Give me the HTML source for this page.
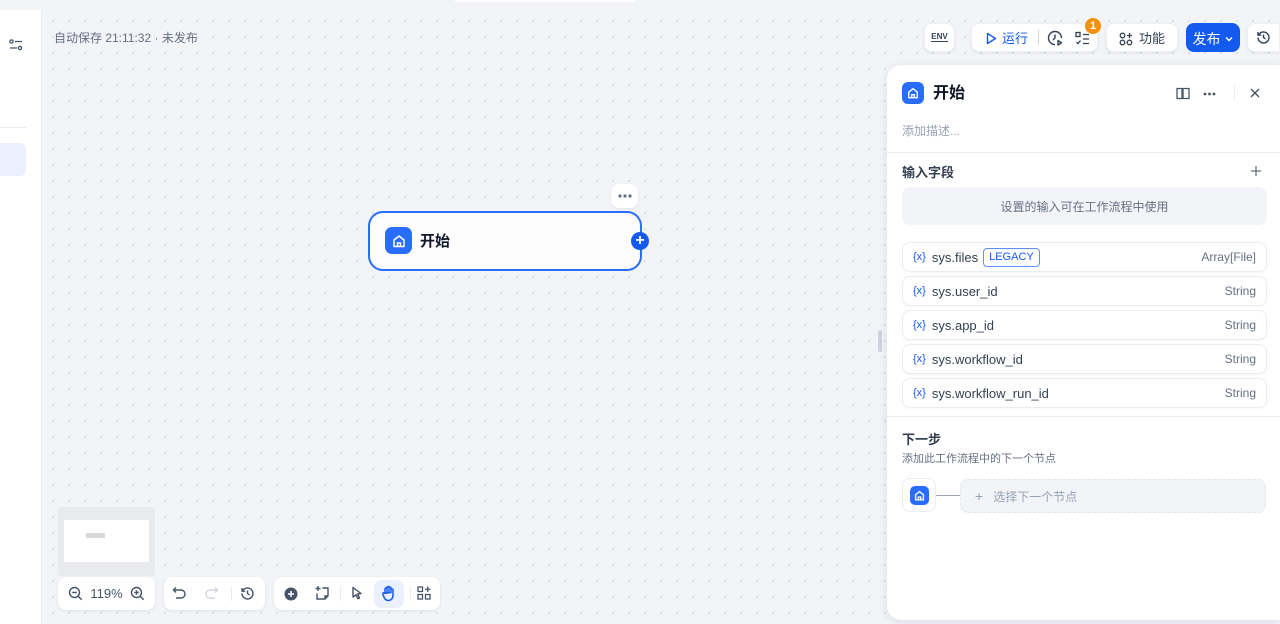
<!DOCTYPE html>
<html><head><meta charset="utf-8"><style>
*{box-sizing:border-box;margin:0;padding:0}
body{width:1280px;height:624px;overflow:hidden;position:relative;background:#f2f4f7;font-family:"Liberation Sans","Noto Sans CJK SC",sans-serif;color:#101828;line-height:1}
.abs{position:absolute}
.canvas{left:42px;top:10px;right:0;bottom:0;background-color:#f2f4f7;background-image:radial-gradient(circle,#d6dae1 0.8px,transparent 1.1px);background-size:16px 16px;background-position:3px 3px}
.side{left:0;top:10px;width:42px;height:614px;background:#fff;border-right:1px solid #eaecf0}
.btn{position:absolute;background:#fff;border-radius:8px;box-shadow:0 1px 3px rgba(16,24,40,.08);border:1px solid #eef0f3;display:flex;align-items:center;justify-content:center;font-size:13px;color:#344054}
.panel{left:887px;top:65px;width:393px;height:555px;background:#fff;border-radius:14px 0 0 14px;box-shadow:0 2px 10px rgba(16,24,40,.1)}
.row{position:absolute;left:15px;width:365px;height:30px;border:1px solid #eaecf0;border-radius:8px;display:flex;align-items:center;padding:0 10px;font-size:13px;color:#354052;box-shadow:0 1px 2px rgba(16,24,40,.04)}
.row .x{color:#155aef;font-size:11px;margin-right:6px}
.row .t{margin-left:auto;color:#676f83;font-size:12px}
.ico{width:22px;height:22px;background:#296dff;border-radius:6px;display:flex;align-items:center;justify-content:center}
</style></head><body>
<div class="abs" style="left:0;top:0;width:1280px;height:10px;background:#f2f4f7"></div>
<div class="abs" style="left:455px;top:0;width:180px;height:2px;background:#fff"></div>
<div class="abs canvas"></div>
<div class="abs side">
  <svg class="abs" style="left:9px;top:29px" width="14" height="12" viewBox="0 0 14 12" fill="none" stroke="#475467" stroke-width="1.3"><circle cx="2.5" cy="2.5" r="1.6"/><path d="M6 2.5h7M1 9h7"/><circle cx="11" cy="9" r="1.6"/></svg>
  <div class="abs" style="left:0;top:117px;width:26px;height:1px;background:#eaecf0"></div>
  <div class="abs" style="left:0;top:133px;width:26px;height:33px;background:#eaf0fe;border-radius:0 6px 6px 0"></div>
</div>
<div class="abs" style="left:54px;top:32px;font-size:12px;color:#676f83">自动保存 21:11:32 · 未发布</div>

<div class="btn" style="left:924px;top:23px;width:31px;height:29px"><span style="font-size:8px;font-weight:bold;border-bottom:1.5px solid #344054;line-height:8px">ENV</span></div>
<div class="btn" style="left:971px;top:23px;width:127px;height:29px;justify-content:flex-start">
  <svg class="abs" style="left:14px;top:8px" width="11" height="13" viewBox="0 0 11 13" fill="none" stroke="#155aef" stroke-width="1.4"><path d="M1.5 1.5v10l8-5z" stroke-linejoin="round"/></svg>
  <span class="abs" style="left:30px;top:8px;color:#155aef">运行</span>
  <div class="abs" style="left:66px;top:6px;width:1px;height:15px;background:#d0d5dd"></div>
  <svg class="abs" style="left:75px;top:6px" width="17" height="17" viewBox="0 0 17 17" fill="none" stroke="#344054" stroke-width="1.4"><path d="M14.5 8A6.5 6.5 0 1 0 8 14.5"/><path d="M8 4.5V8l-2 2"/><path d="M11 10.5v4.5l3.5-2.25z" stroke-linejoin="round"/></svg>
  <svg class="abs" style="left:103px;top:7px" width="15" height="15" viewBox="0 0 15 15" fill="none" stroke="#344054" stroke-width="1.3"><rect x="1" y="1.5" width="4" height="4"/><path d="M8 3.5h6M8 8h6M8 12.5h6M1.5 11l1.5 1.5 2.5-3"/></svg>
</div>
<div class="abs" style="left:1085px;top:18px;width:16px;height:16px;border-radius:50%;background:#f79009;color:#fff;font-size:11px;font-weight:bold;text-align:center;line-height:16px">1</div>
<div class="btn" style="left:1106px;top:23px;width:72px;height:29px;padding-top:2px"><svg width="14" height="14" viewBox="0 0 14 14" fill="none" stroke="#344054" stroke-width="1.3" style="margin-right:6px"><circle cx="3.5" cy="3.5" r="2.3"/><circle cx="3.5" cy="10.5" r="2.3"/><circle cx="10.5" cy="10.5" r="2.3"/><path d="M10.5 1v5M8 3.5h5"/></svg>功能</div>
<div class="abs" style="left:1186px;top:23px;width:54px;height:29px;background:#155aef;border-radius:8px;color:#fff;font-size:14px;display:flex;align-items:center;justify-content:center;padding-top:2px">发布<svg width="10" height="10" viewBox="0 0 10 10" style="margin-left:3px"><path d="M2 3.5l3 3 3-3" stroke="#fff" stroke-width="1.5" fill="none"/></svg></div>
<div class="btn" style="left:1247px;top:23px;width:33px;height:29px;border-radius:8px 0 0 8px"><svg width="15" height="15" viewBox="0 0 15 15" fill="none" stroke="#344054" stroke-width="1.4"><path d="M2 7.5a5.5 5.5 0 1 0 1.6-3.9L2 5.2M2 2v3.2h3.2"/><path d="M7.5 4.5v3l2 1.5"/></svg></div>

<div class="btn" style="left:611px;top:184px;width:27px;height:24px;border:none"><svg width="14" height="4" viewBox="0 0 14 4" fill="#676f83"><circle cx="2" cy="2" r="1.6"/><circle cx="7" cy="2" r="1.6"/><circle cx="12" cy="2" r="1.6"/></svg></div>
<div class="abs" style="left:368px;top:211px;width:274px;height:60px;border:2px solid #296dff;border-radius:15px;background:#fcfcfd"></div>
<div class="abs ico" style="left:385px;top:227px;width:27px;height:27px;border-radius:7px"><svg width="14" height="14" viewBox="0 0 14 14" fill="none" stroke="#fff" stroke-width="1.5"><path d="M2 6l5-4 5 4v6.5H2z" stroke-linejoin="round"/><path d="M5.5 12.5V9h3v3.5"/></svg></div>
<div class="abs" style="left:420px;top:234px;font-size:15px;font-weight:bold">开始</div>
<div class="abs" style="left:631px;top:232px;width:18px;height:18px;border-radius:50%;background:#155aef;color:#fff;font-size:16px;font-weight:bold;text-align:center;line-height:17px">+</div>

<div class="abs" style="left:878px;top:330px;width:4px;height:22px;background:#d0d5dd;border-radius:2px"></div>

<div class="abs panel">
  <div class="abs ico" style="left:15px;top:17px"><svg width="12" height="12" viewBox="0 0 14 14" fill="none" stroke="#fff" stroke-width="1.6"><path d="M2 6l5-4 5 4v6.5H2z" stroke-linejoin="round"/><path d="M5.5 12.5V9h3v3.5"/></svg></div>
  <div class="abs" style="left:46px;top:21px;font-size:16px;font-weight:bold">开始</div>
  <svg class="abs" style="left:289px;top:22px" width="14" height="13" viewBox="0 0 14 13" fill="none" stroke="#475467" stroke-width="1.3"><path d="M1 1.5h5v10H1zM7 1.5h6v10H7z"/></svg>
  <svg class="abs" style="left:316px;top:27px" width="13" height="4" viewBox="0 0 13 4" fill="#475467"><circle cx="2" cy="2" r="1.4"/><circle cx="6.5" cy="2" r="1.4"/><circle cx="11" cy="2" r="1.4"/></svg>
  <div class="abs" style="left:347px;top:20px;width:1px;height:16px;background:#eaecf0"></div>
  <svg class="abs" style="left:363px;top:23px" width="10" height="10" viewBox="0 0 10 10" stroke="#475467" stroke-width="1.4"><path d="M1 1l8 8M9 1l-8 8"/></svg>
  <div class="abs" style="left:15px;top:60px;font-size:12px;color:#98a2b2">添加描述...</div>
  <div class="abs" style="left:0;top:87px;width:393px;height:1px;background:#eaecf0"></div>
  <div class="abs" style="left:15px;top:101px;font-size:13px;font-weight:bold;color:#354052">输入字段</div>
  <svg class="abs" style="left:364px;top:101px" width="10" height="10" viewBox="0 0 10 10" stroke="#676f83" stroke-width="1.3"><path d="M5 0v10M0 5h10"/></svg>
  <div class="abs" style="left:15px;top:122px;width:365px;height:38px;background:#f2f4f7;border-radius:8px;font-size:12px;color:#676f83;text-align:center;line-height:40px">设置的输入可在工作流程中使用</div>
  <div class="row" style="top:177px"><span class="x">{x}</span>sys.files<span style="margin-left:5px;border:1px solid #5e8ffc;border-radius:4px;color:#155aef;font-size:11px;padding:3px 5px">LEGACY</span><span class="t">Array[File]</span></div>
  <div class="row" style="top:211px"><span class="x">{x}</span>sys.user_id<span class="t">String</span></div>
  <div class="row" style="top:245px"><span class="x">{x}</span>sys.app_id<span class="t">String</span></div>
  <div class="row" style="top:279px"><span class="x">{x}</span>sys.workflow_id<span class="t">String</span></div>
  <div class="row" style="top:313px"><span class="x">{x}</span>sys.workflow_run_id<span class="t">String</span></div>
  <div class="abs" style="left:0;top:351px;width:393px;height:1px;background:#eaecf0"></div>
  <div class="abs" style="left:15px;top:368px;font-size:13px;font-weight:bold;color:#354052">下一步</div>
  <div class="abs" style="left:15px;top:389px;font-size:11px;color:#676f83">添加此工作流程中的下一个节点</div>
  <div class="abs" style="left:15px;top:413px;width:34px;height:34px;border:1px solid #eaecf0;border-radius:8px;background:#fff;display:flex;align-items:center;justify-content:center"><div class="ico" style="width:19px;height:19px;border-radius:5px"><svg width="11" height="11" viewBox="0 0 14 14" fill="none" stroke="#fff" stroke-width="1.7"><path d="M2 6l5-4 5 4v6.5H2z"/><path d="M5.5 12.5V9h3v3.5"/></svg></div></div>
  <div class="abs" style="left:49px;top:430px;width:24px;height:1px;background:#98a2b2"></div>
  <div class="abs" style="left:73px;top:414px;width:306px;height:34px;background:#f2f4f7;border:1px dashed #e4e7ec;border-radius:8px;font-size:12px;color:#98a2b2;line-height:32px;padding-left:14px"><span style="margin-right:10px;font-size:14px">+</span>选择下一个节点</div>
</div>

<div class="abs" style="left:58px;top:507px;width:97px;height:69px;background:#e8eaee;border-radius:3px"></div>
<div class="abs" style="left:64px;top:520px;width:85px;height:42px;background:#fff"></div>
<div class="abs" style="left:86px;top:533px;width:19px;height:5px;background:#d9d9d9"></div>

<div class="btn" style="left:58px;top:577px;width:97px;height:33px;border:none;justify-content:space-around;padding:0 6px;color:#475467">
  <svg width="15" height="15" viewBox="0 0 15 15" fill="none" stroke="#475467" stroke-width="1.4"><circle cx="6.5" cy="6.5" r="5"/><path d="M4.3 6.5h4.4M10.2 10.2l3.5 3.5"/></svg><span style="font-size:13px">119%</span>
  <svg width="15" height="15" viewBox="0 0 15 15" fill="none" stroke="#475467" stroke-width="1.4"><circle cx="6.5" cy="6.5" r="5"/><path d="M4.3 6.5h4.4M6.5 4.3v4.4M10.2 10.2l3.5 3.5"/></svg></div>
<div class="btn" style="left:164px;top:577px;width:101px;height:33px;border:none">
  <svg class="abs" style="left:8px;top:9px" width="15" height="14" viewBox="0 0 15 14" fill="none" stroke="#475467" stroke-width="1.4"><path d="M4 1.5L1.5 4 4 6.5M1.5 4H9a4 4 0 0 1 0 8H4"/></svg>
  <svg class="abs" style="left:40px;top:9px" width="15" height="14" viewBox="0 0 15 14" fill="none" stroke="#d0d5dd" stroke-width="1.4"><path d="M11 1.5L13.5 4 11 6.5M13.5 4H6a4 4 0 0 0 0 8h5"/></svg>
  <div class="abs" style="left:67px;top:9px;width:1px;height:15px;background:#eaecf0"></div>
  <svg class="abs" style="left:76px;top:9px" width="15" height="15" viewBox="0 0 15 15" fill="none" stroke="#475467" stroke-width="1.4"><path d="M2 7.5a5.5 5.5 0 1 0 1.6-3.9L2 5.2M2 2v3.2h3.2"/><path d="M7.5 4.5v3l2 1.5"/></svg></div>
<div class="btn" style="left:274px;top:577px;width:166px;height:33px;border:none">
  <svg class="abs" style="left:10px;top:10px" width="14" height="14" viewBox="0 0 14 14"><circle cx="7" cy="7" r="6.5" fill="#475467"/><path d="M7 4v6M4 7h6" stroke="#fff" stroke-width="1.5"/></svg>
  <svg class="abs" style="left:40px;top:8px" width="16" height="16" viewBox="0 0 16 16" fill="none" stroke="#475467" stroke-width="1.4"><path d="M4 1v5M1.5 3.5h5M8.5 3H14v8l-3 3H3V8.5"/><path d="M14 11h-3v3"/></svg>
  <div class="abs" style="left:66px;top:9px;width:1px;height:15px;background:#eaecf0"></div>
  <svg class="abs" style="left:77px;top:9px" width="12" height="15" viewBox="0 0 12 15" fill="none" stroke="#475467" stroke-width="1.4"><path d="M2 1.5l8 6-3.5.5 2 4-1.5.8-2-4L2 11z" stroke-linejoin="round"/></svg>
  <div class="abs" style="left:100px;top:3px;width:30px;height:28px;background:#eaf0fe;border-radius:8px"></div>
  <svg class="abs" style="left:107px;top:8px" width="16" height="17" viewBox="0 0 16 17" fill="none" stroke="#155aef" stroke-width="1.5"><path d="M4 9V4a1 1 0 0 1 2 0v4M6 7V2.5a1 1 0 0 1 2 0V7M8 7V3a1 1 0 0 1 2 0v4.5M10 7.5V5a1 1 0 0 1 2 0v5c0 3.5-2 5.5-4.5 5.5S3.5 14 2.5 11L1.8 9a1 1 0 0 1 2-.6z" stroke-linejoin="round"/></svg>
  <div class="abs" style="left:136px;top:9px;width:1px;height:15px;background:#eaecf0"></div>
  <svg class="abs" style="left:143px;top:9px" width="14" height="14" viewBox="0 0 14 14" fill="none" stroke="#475467" stroke-width="1.3"><rect x="1" y="1" width="4.5" height="4.5"/><rect x="1" y="8.5" width="4.5" height="4.5"/><rect x="8.5" y="8.5" width="4.5" height="4.5"/><path d="M10.75 0.5v5.5M8 3.25h5.5"/></svg></div>
</body></html>
